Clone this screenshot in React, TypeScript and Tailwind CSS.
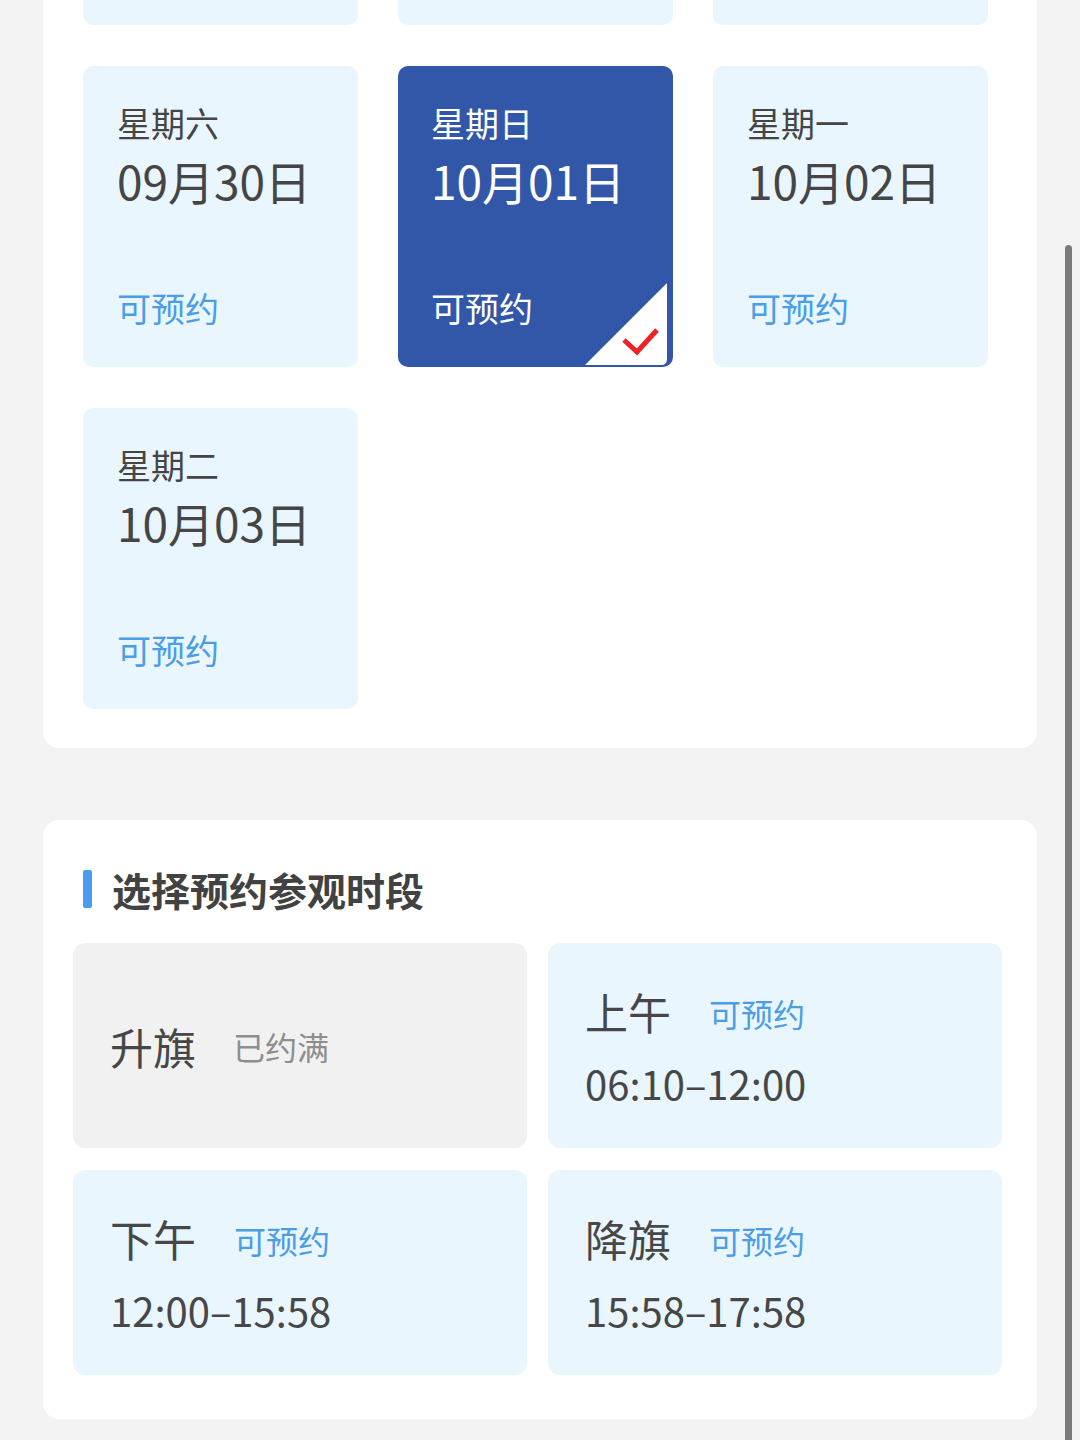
const dates = [
  { week: "星期六", date: "09月30日" },
  { week: "星期日", date: "10月01日", selected: true },
  { week: "星期一", date: "10月02日" },
  { week: "星期二", date: "10月03日" },
]

const slots = [
  { name: "升旗", full: true },
  { name: "上午", time: "06:10–12:00" },
  { name: "下午", time: "12:00–15:58" },
  { name: "降旗", time: "15:58–17:58" },
]

function DateCard({ week, date, selected }: { week: string; date: string; selected?: boolean }) {
  return (
    <div
      className={
        selected
          ? "relative flex h-[301px] flex-col overflow-hidden rounded-[10px] bg-[#3256a8] px-[33px] pt-[40px] pb-[42px] text-white"
          : "relative flex h-[301px] flex-col rounded-[10px] bg-[#e9f6fe] px-[34px] pt-[40px] pb-[42px] text-[#454545]"
      }
    >
      <div className="text-[34px] leading-[34px]">{week}</div>
      <div className="mt-[17px] text-[46px] leading-[46px]">{date}</div>
      <div className={selected ? "mt-auto text-[34px] leading-[34px] text-white" : "mt-auto text-[34px] leading-[34px] text-[#4b9de8]"}>
        可预约
      </div>
      {selected && (
        <svg className="absolute right-[6px] bottom-[2px]" width="82" height="82" viewBox="0 0 82 82">
          <path d="M82 0 L82 76 Q82 82 76 82 L0 82 Z" fill="#ffffff" />
          <path d="M39 57 L52 69 L72 47" fill="none" stroke="#ee2222" strokeWidth="5" strokeLinejoin="miter" />
        </svg>
      )}
    </div>
  )
}

function SlotCard({ name, time, full }: { name: string; time?: string; full?: boolean }) {
  if (full) {
    return (
      <div className="flex h-[205px] items-center rounded-[12px] bg-[#f1f1f1] px-[37px]">
        <span className="text-[43px] leading-[44px] text-[#474747]">{name}</span>
        <span className="ml-[37px] text-[32px] leading-[32px] text-[#8e8e8e]">已约满</span>
      </div>
    )
  }
  return (
    <div className="flex h-[205px] flex-col justify-center rounded-[12px] bg-[#e9f6fe] px-[37px]">
      <div className="flex items-center">
        <span className="text-[43px] leading-[44px] text-[#474747]">{name}</span>
        <span className="ml-[38px] mt-[4px] text-[32px] leading-[32px] text-[#4b9de8]">可预约</span>
      </div>
      <div className="mt-[30px] text-[40px] leading-[40px] text-[#474747]">{time}</div>
    </div>
  )
}

export default function App() {
  return (
    <div
      className="relative h-[1440px] overflow-hidden bg-[#f3f3f3]"
      style={{ fontFamily: '"Noto Sans CJK SC", "Noto Sans", sans-serif' }}
    >
      <div className="mx-[43px] w-[994px]">
        <section className="rounded-b-[16px] bg-white pb-[39px] pl-[40px]">
          {/* bottoms of the previous row, scrolled out of view */}
          <div className="grid grid-cols-[275px_275px_275px] gap-x-[40px]">
            <div className="h-[25px] rounded-b-[10px] bg-[#e9f6fe]" />
            <div className="h-[25px] rounded-b-[10px] bg-[#e9f6fe]" />
            <div className="h-[25px] rounded-b-[10px] bg-[#e9f6fe]" />
          </div>
          <div className="mt-[41px] grid grid-cols-[275px_275px_275px] gap-x-[40px] gap-y-[41px]">
            {dates.map((d) => (
              <DateCard key={d.date} {...d} />
            ))}
          </div>
        </section>

        <section className="mt-[72px] rounded-[16px] bg-white pt-[49px] pb-[44px]">
          <div className="flex items-center pl-[40px]">
            <div className="h-[38px] w-[9px] rounded-[2px] bg-[#4a9cf0]" />
            <h2 className="ml-[20px] text-[39px] leading-[40px] font-bold text-[#424242]">选择预约参观时段</h2>
          </div>
          <div className="mt-[34px] grid grid-cols-[454px_454px] gap-x-[21px] gap-y-[22px] pl-[30px]">
            {slots.map((s) => (
              <SlotCard key={s.name} {...s} />
            ))}
          </div>
        </section>
      </div>

      <div className="absolute top-[245px] left-[1065px] h-[1300px] w-[7px] rounded-full bg-[#7b7b7b]" />
    </div>
  )
}
